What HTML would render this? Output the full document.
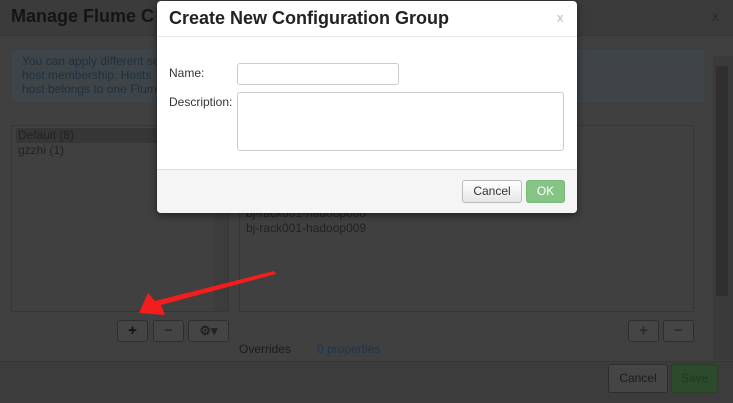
<!DOCTYPE html>
<html><head><meta charset="utf-8"><style>
*{box-sizing:border-box;margin:0;padding:0}
html,body{background:#404040}
body{width:733px;height:403px;overflow:hidden;font-family:"Liberation Sans",sans-serif;position:relative;font-size:12px}
.a{position:absolute}
.btn{position:absolute;border:1px solid #2e2e2e;background:#454545;border-radius:3px;color:#111;text-align:center;font-weight:bold}
</style></head><body>
<div class="a" style="left:0;top:0;width:733px;height:403px;background:#404040"></div>
<div class="a" style="left:0;top:0;width:733px;height:36px;background:#3b3b3b;border-bottom:1px solid #363636"></div>
<div class="a" style="left:11px;top:6px;font-size:18px;font-weight:bold;color:#151515">Manage Flume C</div>
<div class="a" style="left:712px;top:8px;font-size:14px;color:#2a2a2a">x</div>
<div class="a" style="left:11px;top:48px;width:694px;height:56px;background:#3e4447;border:1px solid #394043;border-radius:3px;color:#1e3140;font-size:12px;line-height:14px;padding:5px 10px">You can apply different se<span style="margin-left:305px">n Groups and their</span><br>host membership. Hosts<span style="margin-left:332px">for Flume. Each</span><br>host belongs to one Flum</div>
<div class="a" style="left:713px;top:56px;width:20px;height:304px;background:#3a3a3a"></div>
<div class="a" style="left:716px;top:66px;width:12px;height:230px;background:#2f2f2f"></div>
<div class="a" style="left:11px;top:125px;width:218px;height:187px;border:1px solid #363636;background:#404040"></div>
<div class="a" style="left:214px;top:126px;width:14px;height:185px;background:#3c3c3c"></div>
<div class="a" style="left:16px;top:128px;width:198px;height:15px;background:#363636"></div>
<div class="a" style="left:18px;top:128px;color:#222;font-size:12px;line-height:15px">Default (8)<br>gzzhi (1)</div>
<div class="a" style="left:239px;top:125px;width:455px;height:187px;border:1px solid #363636"></div>
<div class="a" style="left:246px;top:206px;color:#222;line-height:15px">bj-rack001-hadoop008<br>bj-rack001-hadoop009</div>
<div class="btn" style="left:117px;top:320px;width:31px;height:22px;line-height:20px;font-size:15px">+</div>
<div class="btn" style="left:153px;top:320px;width:31px;height:22px;line-height:20px;font-size:15px;color:#2a2a2a">−</div>
<div class="btn" style="left:188px;top:320px;width:41px;height:22px;line-height:20px;font-size:13px;color:#222">⚙▾</div>
<div class="btn" style="left:628px;top:320px;width:31px;height:22px;line-height:20px;font-size:15px;color:#2a2a2a">+</div>
<div class="btn" style="left:663px;top:320px;width:31px;height:22px;line-height:20px;font-size:15px;color:#2a2a2a">−</div>
<div class="a" style="left:239px;top:342px;color:#1c1c1c">Overrides</div>
<div class="a" style="left:317px;top:342px;color:#1c3550">0 properties</div>
<div class="a" style="left:0;top:361px;width:733px;height:42px;background:#3c3c3c;border-top:1px solid #363636"></div>
<div class="btn" style="left:608px;top:364px;width:60px;height:29px;line-height:27px;font-weight:normal;color:#1c1c1c">Cancel</div>
<div class="btn" style="left:671px;top:364px;width:47px;height:29px;line-height:27px;font-weight:normal;background:#2c4a2c;color:#1f3a1f;border-color:#284028">Save</div>
<svg class="a" style="left:0;top:0" width="733" height="403"><polygon points="274,271 276,274 161,305 165,315 139,313 148,293 155,301" fill="#f41d1d"/></svg>
<div class="a" style="left:157px;top:1px;width:420px;height:212px;background:#fff;border-radius:4px;box-shadow:0 2px 8px rgba(0,0,0,.5);overflow:hidden">
 <div class="a" style="left:0;top:0;width:420px;height:36px;border-bottom:1px solid #e5e5e5"></div>
 <div class="a" style="left:12px;top:7px;font-size:18px;font-weight:bold;color:#222">Create New Configuration Group</div>
 <div class="a" style="left:400px;top:9px;font-size:13px;color:#bbb">x</div>
 <div class="a" style="left:12px;top:65px;color:#333">Name:</div>
 <div class="a" style="left:80px;top:62px;width:162px;height:22px;border:1px solid #ccc;border-radius:3px"></div>
 <div class="a" style="left:12px;top:94px;color:#333">Description:</div>
 <div class="a" style="left:80px;top:91px;width:327px;height:59px;border:1px solid #ccc;border-radius:3px"></div>
 <div class="a" style="left:0;top:168px;width:420px;height:44px;background:#f5f5f5;border-top:1px solid #ddd"></div>
 <div class="a" style="left:305px;top:179px;width:60px;height:23px;border:1px solid #bbb;border-radius:3px;background:linear-gradient(#fff,#e6e6e6);text-align:center;line-height:21px;color:#333">Cancel</div>
 <div class="a" style="left:369px;top:179px;width:39px;height:23px;border:1px solid #7bb87b;border-radius:3px;background:#86c486;text-align:center;line-height:21px;color:#fff">OK</div>
</div>
</body></html>
